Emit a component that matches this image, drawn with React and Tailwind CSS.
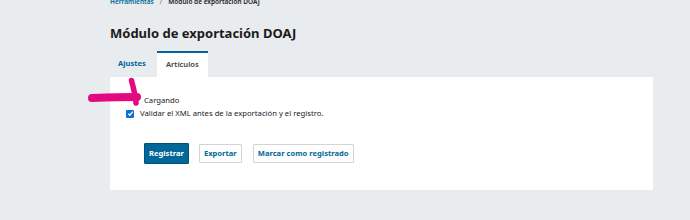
import React from "react";

const PinkArrow = () => (
  <svg
    className="absolute left-[84px] top-[76px]"
    width="60"
    height="34"
    viewBox="0 0 60 34"
  >
    <path
      d="M8 22 C22 21.5, 38 21, 53 21"
      stroke="#e5097f"
      strokeWidth="8"
      strokeLinecap="round"
      fill="none"
    />
    <path
      d="M47.5 4.5 C49.5 12, 51.5 20, 52 27"
      stroke="#e5097f"
      strokeWidth="5.5"
      strokeLinecap="round"
      fill="none"
    />
  </svg>
);

const App = () => {
  return (
    <div className="relative w-[690px] h-[220px] overflow-hidden bg-[#e9ecee] font-['Noto_Sans',sans-serif] text-[#222]">
      <PinkArrow />
      <div className="pl-[110px] pr-[37px]">
        <div className="mt-[-2px] flex items-center gap-[6px] text-[6.5px] font-semibold leading-[8px]">
          <span className="text-[#006798]">Herramientas</span>
          <span className="text-[#888]">/</span>
          <span>Módulo de exportación DOAJ</span>
        </div>

        <h1 className="mt-[18px] text-[13px] font-bold leading-[18px] text-[#1b1b1b]">
          Módulo de exportación DOAJ
        </h1>

        <div className="mt-[9px] flex items-end text-[7.6px] font-bold">
          <div className="h-[26px] pl-[8px] pr-[11px] flex items-center text-[#006798]">
            Ajustes
          </div>
          <div className="h-[26px] px-[9px] flex items-center bg-white border-t-2 border-[#006798] text-[#444] font-semibold">
            Artículos
          </div>
        </div>

        <div className="bg-white h-[113px] pl-[16px] pt-[18px]">
          <div className="pl-[18px] text-[7.7px] leading-[11px] text-[#222]">
            Cargando
          </div>
          <label className="mt-[2px] flex items-center gap-[6px] text-[7.7px] leading-[11px] text-[#222]">
            <span className="w-[8px] h-[8px] rounded-[1px] bg-[#0b6fd6] flex items-center justify-center">
              <svg width="7" height="7" viewBox="0 0 8 8">
                <path
                  d="M1.5 4.2 L3.2 6 L6.6 1.8"
                  stroke="white"
                  strokeWidth="1.4"
                  fill="none"
                />
              </svg>
            </span>
            Validar el XML antes de la exportación y el registro.
          </label>

          <div className="mt-[24px] pl-[18px] flex items-center text-[7.6px] font-bold">
            <button className="h-[21px] px-[4px] bg-[#006798] text-white rounded-[1px] border border-[#00507a]">
              Registrar
            </button>
            <button className="ml-[10px] h-[19px] px-[4px] bg-white text-[#006798] rounded-[1px] border border-[#d4d4d4]">
              Exportar
            </button>
            <button className="ml-[11px] h-[19px] px-[4px] bg-white text-[#006798] rounded-[1px] border border-[#d4d4d4]">
              Marcar como registrado
            </button>
          </div>
        </div>
      </div>
    </div>
  );
};

export default App;
